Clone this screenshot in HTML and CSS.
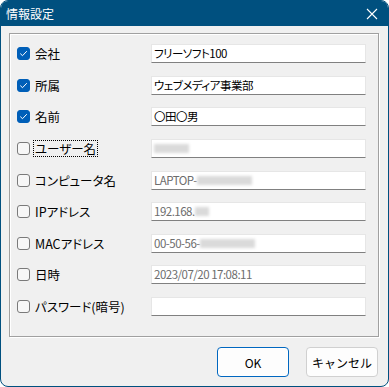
FILE: index.html
```html
<!DOCTYPE html>
<html lang="ja">
<head>
    <meta charset="UTF-8">
    <title>情報設定</title>
    <link rel="stylesheet" href="styles.css">
</head>
<body>
    <div class="window">
        <!-- タイトルバー -->
        <div class="titlebar">
            <span class="title">情報設定</span>
            <svg class="close" width="12" height="12" viewBox="0 0 12 12">
                <path d="M1 1 L11 11 M11 1 L1 11" stroke="#ffffff" stroke-width="1.1" fill="none"/>
            </svg>
        </div>

        <div class="body">
            <!-- 項目一覧 -->
            <div class="panel">
                <div class="row">
                    <span class="check checked"><svg width="9" height="9" viewBox="0 0 9 9"><path d="M1.3 4.6 L3.5 6.7 L7.8 2.2" stroke="#fff" stroke-width="1" fill="none"/></svg></span>
                    <span class="label">会社</span>
                    <div class="field">フリーソフト100</div>
                </div>
                <div class="row">
                    <span class="check checked"><svg width="9" height="9" viewBox="0 0 9 9"><path d="M1.3 4.6 L3.5 6.7 L7.8 2.2" stroke="#fff" stroke-width="1" fill="none"/></svg></span>
                    <span class="label">所属</span>
                    <div class="field">ウェブメディア事業部</div>
                </div>
                <div class="row">
                    <span class="check checked"><svg width="9" height="9" viewBox="0 0 9 9"><path d="M1.3 4.6 L3.5 6.7 L7.8 2.2" stroke="#fff" stroke-width="1" fill="none"/></svg></span>
                    <span class="label">名前</span>
                    <div class="field">〇田〇男</div>
                </div>
                <div class="row">
                    <span class="check"></span>
                    <span class="label focus">ユーザー名</span>
                    <div class="field disabled"><span class="blur w35"></span></div>
                </div>
                <div class="row">
                    <span class="check"></span>
                    <span class="label">コンピュータ名</span>
                    <div class="field disabled">LAPTOP-<span class="blur w55"></span></div>
                </div>
                <div class="row">
                    <span class="check"></span>
                    <span class="label">IPアドレス</span>
                    <div class="field disabled">192.168.<span class="blur w14"></span></div>
                </div>
                <div class="row">
                    <span class="check"></span>
                    <span class="label">MACアドレス</span>
                    <div class="field disabled">00-50-56-<span class="blur w55"></span></div>
                </div>
                <div class="row">
                    <span class="check"></span>
                    <span class="label">日時</span>
                    <div class="field disabled">2023/07/20 17:08:11</div>
                </div>
                <div class="row">
                    <span class="check"></span>
                    <span class="label">パスワード(暗号)</span>
                    <div class="field"></div>
                </div>
            </div>

            <!-- ボタン -->
            <div class="buttons">
                <button class="button button-default">OK</button>
                <button class="button">キャンセル</button>
            </div>
        </div>
    </div>
</body>
</html>
```

FILE: styles.css
```css
* {
    margin: 0;
    padding: 0;
    box-sizing: border-box;
}

body {
    font-family: "Noto Sans CJK JP", "Noto Sans", sans-serif;
    font-size: 12px;
    color: #000000;
    background: #ffffff;
    font-feature-settings: "palt";
}

/* ウィンドウ */
.window {
    width: 389px;
    height: 387px;
    background: #f0f0f0;
    border: 1px solid #00507f;
    border-radius: 8px;
    overflow: hidden;
    display: flex;
    flex-direction: column;
}

.titlebar {
    height: 25px;
    background: #00507f;
    color: #ffffff;
    display: flex;
    align-items: center;
    justify-content: space-between;
    padding: 0 10px 0 5px;
    flex-shrink: 0;
}

.title {
    font-size: 12px;
    line-height: 1;
    font-feature-settings: normal;
}

.close {
    display: block;
}

.body {
    padding: 7px 9px 0 8px;
    display: flex;
    flex-direction: column;
}

/* パネル */
.panel {
    height: 304px;
    border: 1px solid #a0a0a0;
    box-shadow: inset 1px 1px 0 #ffffff, 1px 1px 0 #ffffff;
    padding: 4px 12px 0 7px;
    display: grid;
    grid-template-rows: repeat(9, 31.6px);
}

.row {
    display: flex;
    align-items: center;
}

.check {
    width: 13px;
    height: 13px;
    border: 1px solid #7a7a7a;
    border-radius: 3px;
    background: #f7f7f7;
    flex-shrink: 0;
    display: flex;
    align-items: center;
    justify-content: center;
}

.check.checked {
    background: #005fb8;
    border-color: #005fb8;
}

.check svg {
    display: block;
}

.label {
    margin-left: 3px;
    font-size: 12.5px;
    line-height: 15px;
    padding: 0 1px;
    border: 1px dotted transparent;
}

.label.focus {
    border-color: #000000;
}

.field {
    margin-left: auto;
    width: 215px;
    height: 19px;
    background: #ffffff;
    border: 1px solid #e6e6e6;
    border-bottom: 1px solid #808080;
    padding: 0 2px;
    font-size: 11.5px;
    letter-spacing: -0.5px;
    line-height: 17px;
    white-space: nowrap;
    display: flex;
    align-items: center;
}

.field.disabled {
    color: #6d6d6d;
}

.blur {
    display: inline-block;
    height: 9px;
    background: #dadada;
    filter: blur(1.5px);
}

.w14 { width: 14px; }
.w35 { width: 35px; }
.w55 { width: 55px; }

/* ボタン */
.buttons {
    display: flex;
    justify-content: flex-end;
    gap: 17px;
    padding-top: 10px;
    padding-right: 1px;
}

.button {
    width: 72px;
    height: 30px;
    font-family: inherit;
    font-size: 12px;
    background: #fdfdfd;
    border: 1px solid #d0d0d0;
    border-radius: 4px;
    color: #000000;
}

.button-default {
    border: 1px solid #0067c0;
    box-shadow: inset 0 0 0 1px #ffffff;
}
```
